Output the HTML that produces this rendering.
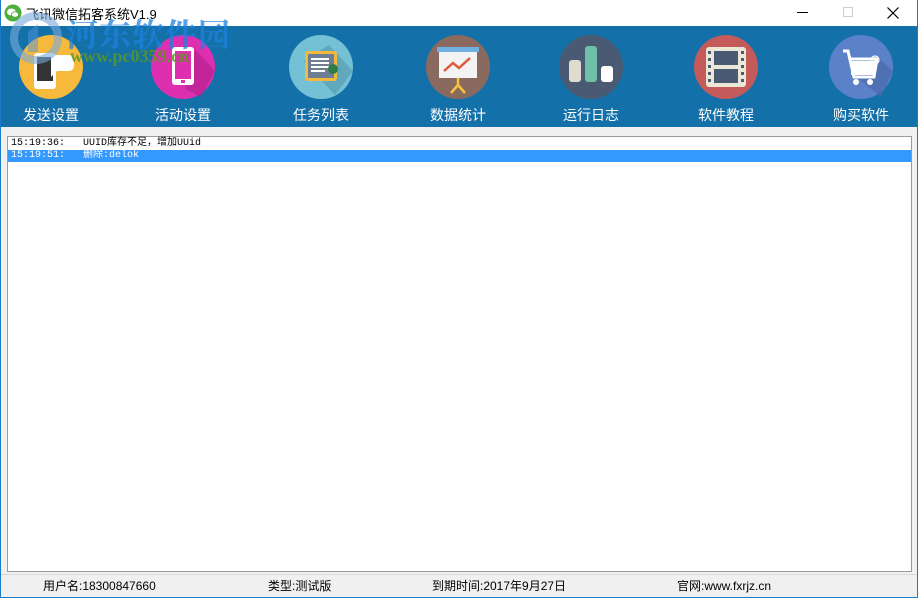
<!DOCTYPE html>
<html><head><meta charset="utf-8"><style>
*{margin:0;padding:0;box-sizing:border-box}
body{width:918px;height:598px;background:#f0f0f0;position:relative;overflow:hidden;font-family:"Liberation Sans","Noto Sans CJK SC",sans-serif}
.frame{position:absolute;inset:0;border:1px solid #1a7cc9;border-top:none}
.title{position:absolute;left:0;top:0;width:918px;height:26px;background:#fff}
.title .t{position:absolute;left:26px;top:4px;font-size:13px;color:#000}
.tb{position:absolute;left:1px;top:26px;width:916px;height:101px;background:#1470a8}
.btn{position:absolute;top:9px;width:64px;text-align:center}
.btn svg{display:block;width:64px;height:64px}
.btn span{position:absolute;left:-30px;width:124px;top:70px;color:#fff;font-size:14px;text-align:center}
.list{position:absolute;left:7px;top:136px;width:905px;height:436px;background:#fff;border:1px solid #9a9a9a;font-family:"Liberation Mono","Noto Sans CJK SC",monospace;font-size:10px;padding-top:1px}
.row{height:12px;line-height:12px;padding-left:3px;white-space:pre}
.sel{background:#3399ff;color:#fff}
.status{position:absolute;top:577px;font-size:12px;color:#000}
.wm1{position:absolute;left:66px;top:10px;font-size:32px;font-weight:bold;color:rgba(30,130,220,.75);font-family:"Noto Serif CJK SC",serif;letter-spacing:1px}
.wm2{position:absolute;left:70px;top:46px;font-size:18px;font-weight:bold;color:rgba(90,150,30,.85);font-family:"Liberation Serif",serif}
</style></head><body>
<div class="title">
<svg style="position:absolute;left:4px;top:4px" width="18" height="18"><circle cx="9" cy="9" r="8.5" fill="#4cae3c"/><ellipse cx="7.5" cy="8" rx="4.5" ry="3.5" fill="#fff"/><ellipse cx="11" cy="10.5" rx="3.5" ry="2.8" fill="#fff" stroke="#4cae3c" stroke-width=".8"/></svg>
<div class="t">飞讯微信拓客系统V1.9</div>
<div style="position:absolute;left:797px;top:12px;width:11px;height:1px;background:#000"></div>
<div style="position:absolute;left:843px;top:7px;width:10px;height:10px;border:1px solid #ccc"></div>
<svg style="position:absolute;left:887px;top:7px" width="12" height="12"><path d="M0.5 0.5L11.5 11.5M11.5 0.5L0.5 11.5" stroke="#000" stroke-width="1.2"/></svg>
</div>
<div class="tb">
<div class="btn" style="left:18px"><svg viewBox="0 0 64 64"><circle cx="32" cy="32" r="32" fill="#f6b93b"/><rect x="15" y="18" width="22" height="36" rx="3" fill="#fff"/><rect x="18" y="22" width="16" height="24" fill="#333"/><path d="M32 20h18a5 5 0 015 5v6a5 5 0 01-5 5H38l-6 6z" fill="#fff"/></svg><span>发送设置</span></div>
<div class="btn" style="left:150px"><svg viewBox="0 0 64 64"><circle cx="32" cy="32" r="32" fill="#dd2fb0"/><path d="M44 14L64 36 50 62 34 54z" fill="#b0208c" opacity=".6"/><rect x="21" y="12" width="22" height="38" rx="3" fill="#fff"/><rect x="24" y="16" width="16" height="28" fill="#dd2fb0"/><rect x="30" y="45" width="4" height="3" fill="#dd2fb0"/></svg><span>活动设置</span></div>
<div class="btn" style="left:288px"><svg viewBox="0 0 64 64"><circle cx="32" cy="32" r="32" fill="#74c0d4"/><path d="M14 26L46 60 64 36 40 10z" fill="#5a9eb2" opacity=".7"/><rect x="16" y="16" width="32" height="30" rx="3" fill="#f4b93c"/><rect x="19" y="19" width="26" height="24" fill="#6e7e93"/><path d="M22 24h18M22 28h18M22 32h18M22 36h14" stroke="#fff" stroke-width="2"/><circle cx="44" cy="34" r="5" fill="#2e7d48"/></svg><span>任务列表</span></div>
<div class="btn" style="left:425px"><svg viewBox="0 0 64 64"><circle cx="32" cy="32" r="32" fill="#8a6a5e"/><rect x="11" y="12" width="42" height="5" fill="#6fb0e0"/><rect x="13" y="17" width="38" height="26" fill="#f3f3f3"/><path d="M18 36l9-8 6 5 11-10" stroke="#e05a3a" stroke-width="2.5" fill="none"/><path d="M32 43v8M32 50l-7 8M32 50l7 8" stroke="#f4c43c" stroke-width="2.5"/></svg><span>数据统计</span></div>
<div class="btn" style="left:558px"><svg viewBox="0 0 64 64"><circle cx="32" cy="32" r="32" fill="#4a5a72"/><rect x="10" y="25" width="12" height="22" rx="3" fill="#e0dccd"/><rect x="26" y="11" width="12" height="36" rx="3" fill="#6fc0a8"/><rect x="42" y="31" width="12" height="16" rx="3" fill="#fff"/></svg><span>运行日志</span></div>
<div class="btn" style="left:693px"><svg viewBox="0 0 64 64"><circle cx="32" cy="32" r="32" fill="#c55a5a"/><rect x="12" y="12" width="40" height="40" rx="3" fill="#ebe7d6"/><rect x="20" y="16" width="24" height="14" fill="#4a5a72"/><rect x="20" y="34" width="24" height="14" fill="#4a5a72"/><g fill="#4a5a72"><rect x="14" y="16" width="3" height="3"/><rect x="14" y="23" width="3" height="3"/><rect x="14" y="30" width="3" height="3"/><rect x="14" y="37" width="3" height="3"/><rect x="14" y="44" width="3" height="3"/><rect x="47" y="16" width="3" height="3"/><rect x="47" y="23" width="3" height="3"/><rect x="47" y="30" width="3" height="3"/><rect x="47" y="37" width="3" height="3"/><rect x="47" y="44" width="3" height="3"/></g></svg><span>软件教程</span></div>
<div class="btn" style="left:828px"><svg viewBox="0 0 64 64"><circle cx="32" cy="32" r="32" fill="#5b82c8"/><path d="M30 44L52 62 64 36 46 20z" fill="#4a68a8" opacity=".7"/><path d="M14 16h5l6 26h20l3-18H22" stroke="#fff" stroke-width="3" fill="none"/><rect x="22" y="26" width="24" height="14" fill="#fff"/><circle cx="27" cy="47" r="3" fill="#fff"/><circle cx="41" cy="47" r="3" fill="#fff"/><circle cx="46" cy="25" r="4" fill="none" stroke="#fff" stroke-width="1.2"/><path d="M46 22v6M43 25h6" stroke="#fff" stroke-width="1.2"/></svg><span>购买软件</span></div>
</div>
<svg style="position:absolute;left:8px;top:12px" width="56" height="52"><circle cx="28" cy="26" r="22" fill="none" stroke="rgba(120,170,220,.6)" stroke-width="8"/><path d="M20 40V20l10-8v28" fill="rgba(80,150,220,.5)"/></svg>
<div class="wm1">河东软件园</div>
<div class="wm2">www.pc0359.cn</div>
<div class="list">
<div class="row">15:19:36:   UUID库存不足，增加UUid</div>
<div class="row sel">15:19:51:   删除:delok</div>
</div>
<div style="position:absolute;left:1px;top:574px;width:916px;height:1px;background:#d8d8d8"></div>
<div class="status" style="left:43px">用户名:18300847660</div>
<div class="status" style="left:268px">类型:测试版</div>
<div class="status" style="left:432px">到期时间:2017年9月27日</div>
<div class="status" style="left:677px">官网:www.fxrjz.cn</div>
<div class="frame"></div>
</body></html>
